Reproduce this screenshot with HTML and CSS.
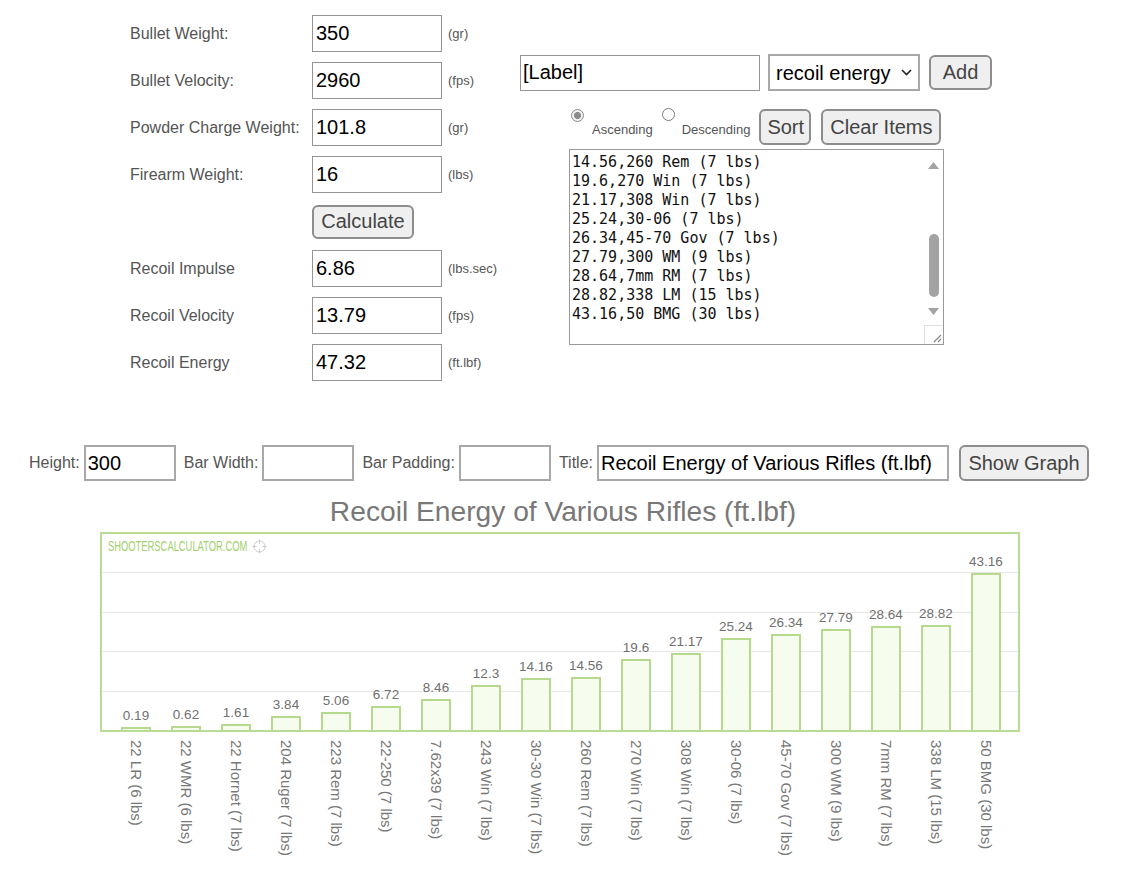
FILE: index.html
```html
<!DOCTYPE html>
<html>
<head>
<meta charset="utf-8">
<title>Recoil Calculator</title>
<link rel="stylesheet" href="styles.css">
</head>
<body>
<div class="top">
  <div class="calc">
    <span class="lbl">Bullet Weight:</span><input class="field" value="350"><span class="unit">(gr)</span>
    <span class="lbl">Bullet Velocity:</span><input class="field" value="2960"><span class="unit">(fps)</span>
    <span class="lbl">Powder Charge Weight:</span><input class="field" value="101.8"><span class="unit">(gr)</span>
    <span class="lbl">Firearm Weight:</span><input class="field" value="16"><span class="unit">(lbs)</span>
    <span></span><button class="btn calc-btn">Calculate</button><span></span>
    <span class="lbl">Recoil Impulse</span><input class="field" value="6.86"><span class="unit">(lbs.sec)</span>
    <span class="lbl">Recoil Velocity</span><input class="field" value="13.79"><span class="unit">(fps)</span>
    <span class="lbl">Recoil Energy</span><input class="field" value="47.32"><span class="unit">(ft.lbf)</span>
  </div>
  <div class="panel">
    <div class="add-row">
      <input class="label-input" value="[Label]">
      <div class="select-wrap">
        <select class="sel"><option>recoil energy</option></select>
        <svg class="chev" width="11" height="7" viewBox="0 0 11 7"><path d="M1 1 L5.5 5.5 L10 1" fill="none" stroke="#222" stroke-width="1.6"/></svg>
      </div>
      <button class="btn add-btn">Add</button>
    </div>
    <div class="sort-row">
      <input type="radio" name="ord" class="radio r1" checked><span class="radio-lbl">Ascending</span>
      <input type="radio" name="ord" class="radio r2"><span class="radio-lbl">Descending</span>
      <button class="btn sort-btn">Sort</button>
      <button class="btn clear-btn">Clear Items</button>
    </div>
    <div class="list-box">
      <div class="list-text">
        <div class="list-inner">14.56,260 Rem (7 lbs)
19.6,270 Win (7 lbs)
21.17,308 Win (7 lbs)
25.24,30-06 (7 lbs)
26.34,45-70 Gov (7 lbs)
27.79,300 WM (9 lbs)
28.64,7mm RM (7 lbs)
28.82,338 LM (15 lbs)
43.16,50 BMG (30 lbs)</div>
      </div>
      <div class="scrollbar">
        <svg class="arrow up" width="11" height="7" viewBox="0 0 11 7"><polygon points="0,7 5.5,0 11,7" fill="#a3a3a3"/></svg>
        <div class="thumb"></div>
        <svg class="arrow down" width="11" height="7" viewBox="0 0 11 7"><polygon points="0,0 5.5,7 11,0" fill="#a3a3a3"/></svg>
        <div class="corner"><svg width="19" height="19" viewBox="0 0 19 19"><path d="M9 16 L16 9 M13 16 L16 13" stroke="#888" stroke-width="1.2"/></svg></div>
      </div>
    </div>
  </div>
</div>

<div class="graph-controls">
  <span class="gc-lbl">Height:</span><input class="gc-input" value="300">
  <span class="gc-lbl">Bar Width:</span><input class="gc-input" value="">
  <span class="gc-lbl">Bar Padding:</span><input class="gc-input" value="">
  <span class="gc-lbl">Title:</span><input class="gc-input title-input" value="Recoil Energy of Various Rifles (ft.lbf)">
  <button class="btn show-btn">Show Graph</button>
</div>

<div class="chart">
  <div class="chart-title">Recoil Energy of Various Rifles (ft.lbf)</div>
  <div class="chart-box">
    <div class="watermark">
      <span class="wm-text">SHOOTERSCALCULATOR.COM</span>
      <svg class="reticle" width="15" height="15" viewBox="0 0 15 15"><circle cx="7.5" cy="7.5" r="5.5" fill="none" stroke="#c9c9c9" stroke-width="1"/><path d="M7.5 0.5 V4.5 M7.5 10.5 V14.5 M0.5 7.5 H4.5 M10.5 7.5 H14.5" stroke="#c9c9c9" stroke-width="1"/></svg>
    </div>
    <div class="plot">
      <div class="col"><span class="val">0.19</span><div class="bar" style="height:3px"></div></div>
      <div class="col"><span class="val">0.62</span><div class="bar" style="height:4px"></div></div>
      <div class="col"><span class="val">1.61</span><div class="bar" style="height:5.9px"></div></div>
      <div class="col"><span class="val">3.84</span><div class="bar" style="height:14px"></div></div>
      <div class="col"><span class="val">5.06</span><div class="bar" style="height:18.5px"></div></div>
      <div class="col"><span class="val">6.72</span><div class="bar" style="height:24.5px"></div></div>
      <div class="col"><span class="val">8.46</span><div class="bar" style="height:30.9px"></div></div>
      <div class="col"><span class="val">12.3</span><div class="bar" style="height:44.9px"></div></div>
      <div class="col"><span class="val">14.16</span><div class="bar" style="height:51.7px"></div></div>
      <div class="col"><span class="val">14.56</span><div class="bar" style="height:53.1px"></div></div>
      <div class="col"><span class="val">19.6</span><div class="bar" style="height:71.5px"></div></div>
      <div class="col"><span class="val">21.17</span><div class="bar" style="height:77.3px"></div></div>
      <div class="col"><span class="val">25.24</span><div class="bar" style="height:92.1px"></div></div>
      <div class="col"><span class="val">26.34</span><div class="bar" style="height:96.1px"></div></div>
      <div class="col"><span class="val">27.79</span><div class="bar" style="height:101.4px"></div></div>
      <div class="col"><span class="val">28.64</span><div class="bar" style="height:104.5px"></div></div>
      <div class="col"><span class="val">28.82</span><div class="bar" style="height:105.2px"></div></div>
      <div class="col"><span class="val">43.16</span><div class="bar" style="height:157.5px"></div></div>
    </div>
  </div>
  <div class="xlabels">
    <div class="xl"><span>22 LR (6 lbs)</span></div>
    <div class="xl"><span>22 WMR (6 lbs)</span></div>
    <div class="xl"><span>22 Hornet (7 lbs)</span></div>
    <div class="xl"><span>204 Ruger (7 lbs)</span></div>
    <div class="xl"><span>223 Rem (7 lbs)</span></div>
    <div class="xl"><span>22-250 (7 lbs)</span></div>
    <div class="xl"><span>7.62x39 (7 lbs)</span></div>
    <div class="xl"><span>243 Win (7 lbs)</span></div>
    <div class="xl"><span>30-30 Win (7 lbs)</span></div>
    <div class="xl"><span>260 Rem (7 lbs)</span></div>
    <div class="xl"><span>270 Win (7 lbs)</span></div>
    <div class="xl"><span>308 Win (7 lbs)</span></div>
    <div class="xl"><span>30-06 (7 lbs)</span></div>
    <div class="xl"><span>45-70 Gov (7 lbs)</span></div>
    <div class="xl"><span>300 WM (9 lbs)</span></div>
    <div class="xl"><span>7mm RM (7 lbs)</span></div>
    <div class="xl"><span>338 LM (15 lbs)</span></div>
    <div class="xl"><span>50 BMG (30 lbs)</span></div>
  </div>
</div>
</body>
</html>
```

FILE: styles.css
```css
* { box-sizing: border-box; }

body {
  margin: 0;
  background: #fff;
  color: #555;
  font-family: "Liberation Sans", Arial, sans-serif;
}

/* ---------- top section ---------- */
.top {
  display: flex;
  align-items: flex-start;
}

.calc {
  width: 520px;
  padding: 15px 0 0 130px;
  display: grid;
  grid-template-columns: 182px 130px auto;
  grid-auto-rows: 37px;
  row-gap: 10px;
  align-items: center;
}

.lbl {
  font-size: 16px;
  color: #555;
}

.field {
  width: 130px;
  height: 37px;
  border: 1px solid #959595;
  padding: 0 3px;
  font: 20px "Liberation Sans", Arial, sans-serif;
  color: #000;
  background: #fff;
  outline: none;
}

.unit {
  font-size: 13px;
  margin-left: 6px;
  color: #555;
}

.btn {
  font: 20px "Liberation Sans", Arial, sans-serif;
  color: #444;
  background: #efefef;
  border: 2px solid #8d8d8d;
  border-radius: 6px;
  padding: 0 6px;
  height: 36px;
  cursor: pointer;
}

.calc-btn {
  width: 102px;
  height: 34px;
  justify-self: start;
}

/* ---------- right panel ---------- */
.panel {
  padding-top: 54px;
}

.add-row {
  display: flex;
  align-items: center;
  height: 37px;
}

.label-input {
  width: 240px;
  height: 36px;
  border: 1px solid #959595;
  padding: 0 2px;
  font: 20px "Liberation Sans", Arial, sans-serif;
  color: #000;
  outline: none;
}

.select-wrap {
  position: relative;
  margin-left: 8px;
}

.sel {
  appearance: none;
  -webkit-appearance: none;
  width: 152px;
  height: 37px;
  border: 2px solid #a8a8a8;
  border-radius: 0;
  background: #fff;
  padding: 0 0 0 6px;
  font: 20px "Liberation Sans", Arial, sans-serif;
  color: #000;
  display: block;
}

.chev {
  position: absolute;
  right: 8px;
  top: 15px;
  pointer-events: none;
}

.add-btn {
  width: 63px;
  height: 35px;
  margin-left: 9px;
}

.sort-row {
  display: flex;
  align-items: flex-start;
  margin-top: 17px;
}

.radio {
  appearance: none;
  -webkit-appearance: none;
  width: 13px;
  height: 13px;
  margin: 0;
  border: 1px solid #7a7a7a;
  border-radius: 50%;
  background: #fff;
}

.radio:checked {
  border-color: #8a8a8a;
  background: radial-gradient(circle, #8c8c8c 0 3.3px, #f3f3f3 3.8px);
}

.r1 { margin-left: 51px; margin-right: 8px; margin-top: 1px; }
.r2 { margin-left: 9px; margin-right: 7px; margin-top: 0; }

.radio-lbl {
  font-size: 13px;
  line-height: 15px;
  margin-top: 14px;
  color: #555;
}

.sort-btn {
  width: 52px;
  margin-left: 9px;
  margin-top: 1px;
}

.clear-btn {
  width: 120px;
  margin-left: 10px;
  margin-top: 1px;
}

.list-box {
  display: flex;
  width: 375px;
  height: 196px;
  margin: 4px 0 0 49px;
  border: 1px solid #9a9a9a;
  background: #fff;
}

.list-text {
  flex: 1;
  overflow: hidden;
  padding: 2.5px 0 0 2px;
}

.list-inner {
  white-space: pre;
  font: 15px/19px "DejaVu Sans Mono", "Liberation Mono", monospace;
  color: #111;
}

.scrollbar {
  width: 19px;
  display: flex;
  flex-direction: column;
  align-items: center;
  padding-top: 12px;
}

.arrow { display: block; }

.thumb {
  width: 10px;
  height: 63px;
  margin-top: 65px;
  border-radius: 5px;
  background: #a3a3a3;
}

.arrow.down { margin-top: 11px; }

.corner {
  margin-top: auto;
  width: 19px;
  height: 19px;
  border-top: 1px solid #e2e2e2;
  border-left: 1px solid #e2e2e2;
}

.corner svg { display: block; }

/* ---------- graph controls ---------- */
.graph-controls {
  display: flex;
  align-items: center;
  height: 36px;
  margin-top: 64px;
  padding-left: 29px;
}

.gc-lbl {
  font-size: 16px;
  color: #555;
  margin-right: 4px;
}

.gc-input {
  width: 92px;
  height: 36px;
  border: 2px solid #a8a8a8;
  padding: 0 2px;
  font: 20px "Liberation Sans", Arial, sans-serif;
  color: #000;
  margin-right: 8px;
  outline: none;
}

.title-input { width: 352px; }

.show-btn {
  width: 130px;
  height: 36px;
  margin-left: 2px;
}

/* ---------- chart ---------- */
.chart {
  width: 920px;
  margin-left: 100px;
}

.chart-title {
  margin-top: 14px;
  padding-left: 6px;
  text-align: center;
  font-size: 28.2px;
  line-height: 32px;
  color: #787878;
}

.chart-box {
  position: relative;
  margin-top: 5px;
  height: 200px;
  border: 2px solid #b9dc93;
}

.watermark {
  position: absolute;
  left: 6px;
  top: 4px;
  display: flex;
  align-items: center;
}

.wm-text {
  display: inline-block;
  font-family: "Liberation Sans", sans-serif;
  font-size: 15px;
  line-height: 16px;
  color: #a2cf6d;
  transform: scaleX(0.625);
  transform-origin: left center;
  margin-right: -79px;
}

.reticle { display: block; }

.plot {
  height: 196px;
  display: flex;
  align-items: flex-end;
  padding-left: 9px;
  background: repeating-linear-gradient(to top, transparent 0 38.5px, #e6e6e6 38.5px 39.5px);
}

.col {
  width: 50px;
  display: flex;
  flex-direction: column;
  align-items: center;
  justify-content: flex-end;
}

.val {
  font-size: 13.5px;
  line-height: 16px;
  color: #707070;
  margin-bottom: 3px;
}

.bar {
  width: 30px;
  border: 2px solid #b6da8d;
  border-bottom: none;
  background: #f6fcee;
}

.xlabels {
  display: flex;
  padding-left: 11px;
  margin-top: 8px;
}

.xl {
  width: 50px;
  display: flex;
  justify-content: center;
}

.xl span {
  writing-mode: vertical-rl;
  font-size: 15px;
  line-height: 18px;
  color: #787878;
  white-space: nowrap;
}
```
